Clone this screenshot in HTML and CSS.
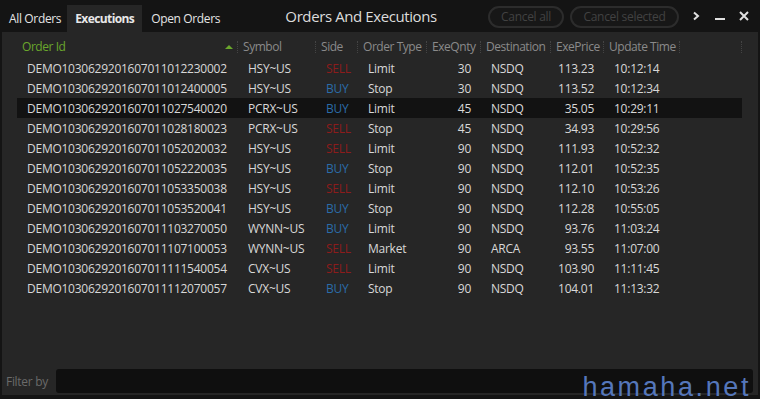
FILE: index.html
```html
<!DOCTYPE html>
<html lang="en">
<head>
    <meta charset="UTF-8">
    <meta name="viewport" content="width=device-width, initial-scale=1.0">
    <title>Orders And Executions</title>
    <link rel="stylesheet" href="styles.css">
</head>
<body>
    <div class="window">
        <div class="titlebar">
            <div class="tabs">
                <div class="tab">All Orders</div>
                <div class="tab active">Executions</div>
                <div class="tab">Open Orders</div>
            </div>
            <div class="title">Orders And Executions</div>
            <div class="actions">
                <button class="pill pill-all">Cancel all</button>
                <button class="pill pill-selected">Cancel selected</button>
            </div>
            <div class="win-icons">
                <span class="win-icon">
                    <svg width="8" height="10" viewBox="0 0 8 10"><path d="M2 1.5 L6 5 L2 8.5" fill="none" stroke="#e0e0e0" stroke-width="2"/></svg>
                </span>
                <span class="win-icon">
                    <svg width="10" height="10" viewBox="0 0 10 10"><rect x="0" y="7" width="10" height="2" fill="#e0e0e0"/></svg>
                </span>
                <span class="win-icon">
                    <svg width="10" height="10" viewBox="0 0 10 10"><path d="M1 1 L9 9 M9 1 L1 9" stroke="#e0e0e0" stroke-width="2"/></svg>
                </span>
            </div>
        </div>

        <div class="panel">
            <div class="grid">
                <div class="head">
                    <div class="hcell sorted">Order Id<span class="sort-arrow"></span></div>
                    <div class="hcell">Symbol</div>
                    <div class="hcell">Side</div>
                    <div class="hcell">Order Type</div>
                    <div class="hcell">ExeQnty</div>
                    <div class="hcell">Destination</div>
                    <div class="hcell">ExePrice</div>
                    <div class="hcell">Update Time</div>
                    <div class="hcell"></div>
                </div>
                <div id="rows"></div>
            </div>
            <div class="filter">
                <label class="filter-label">Filter by</label>
                <input class="filter-input" type="text">
            </div>
        </div>
        <div class="watermark">hamaha.net</div>
    </div>

    <script>
        const executions = [
            ["DEMO1030629201607011012230002", "HSY~US", "SELL", "Limit", 30, "NSDQ", "113.23", "10:12:14"],
            ["DEMO1030629201607011012400005", "HSY~US", "BUY", "Stop", 30, "NSDQ", "113.52", "10:12:34"],
            ["DEMO1030629201607011027540020", "PCRX~US", "BUY", "Limit", 45, "NSDQ", "35.05", "10:29:11"],
            ["DEMO1030629201607011028180023", "PCRX~US", "SELL", "Stop", 45, "NSDQ", "34.93", "10:29:56"],
            ["DEMO1030629201607011052020032", "HSY~US", "SELL", "Limit", 90, "NSDQ", "111.93", "10:52:32"],
            ["DEMO1030629201607011052220035", "HSY~US", "BUY", "Stop", 90, "NSDQ", "112.01", "10:52:35"],
            ["DEMO1030629201607011053350038", "HSY~US", "SELL", "Limit", 90, "NSDQ", "112.10", "10:53:26"],
            ["DEMO1030629201607011053520041", "HSY~US", "BUY", "Stop", 90, "NSDQ", "112.28", "10:55:05"],
            ["DEMO1030629201607011103270050", "WYNN~US", "BUY", "Limit", 90, "NSDQ", "93.76", "11:03:24"],
            ["DEMO1030629201607011107100053", "WYNN~US", "SELL", "Market", 90, "ARCA", "93.55", "11:07:00"],
            ["DEMO1030629201607011111540054", "CVX~US", "SELL", "Limit", 90, "NSDQ", "103.90", "11:11:45"],
            ["DEMO1030629201607011112070057", "CVX~US", "BUY", "Stop", 90, "NSDQ", "104.01", "11:13:32"]
        ];

        const rows = document.getElementById('rows');
        executions.forEach((e, i) => {
            const row = document.createElement('div');
            row.className = 'row' + (i === 2 ? ' selected' : '');
            row.innerHTML = `
                <div class="cell">${e[0]}</div>
                <div class="cell">${e[1]}</div>
                <div class="cell ${e[2] === 'BUY' ? 'buy' : 'sell'}">${e[2]}</div>
                <div class="cell">${e[3]}</div>
                <div class="cell num">${e[4]}</div>
                <div class="cell">${e[5]}</div>
                <div class="cell num">${e[6]}</div>
                <div class="cell">${e[7]}</div>
                <div class="cell"></div>
            `;
            rows.appendChild(row);
        });
    </script>
</body>
</html>
```

FILE: styles.css
```css
* {
    box-sizing: border-box;
}
body {
    margin: 0;
    background: #141414;
    font-family: "Open Sans", "Noto Sans", sans-serif;
    font-size: 12px;
    color: #d6d6d6;
}
.window {
    position: relative;
    width: 760px;
    height: 399px;
    background: #141414;
    display: flex;
    flex-direction: column;
    overflow: hidden;
}

/* title bar */
.titlebar {
    height: 32px;
    display: flex;
    align-items: flex-end;
}
.tabs {
    display: flex;
    align-items: flex-end;
    height: 32px;
}
.tab {
    height: 27px;
    line-height: 27px;
    padding: 0 6px 0 9px;
    color: #e4e4e4;
    letter-spacing: -0.35px;
}
.tab.active {
    background: #262626;
    font-weight: bold;
    color: #e8e8e8;
    padding: 0 8px 0 8px;
    margin: 0 3px 0 0;
    letter-spacing: -0.6px;
}
.tab:last-child {
    padding-left: 6px;
}
.title {
    flex: 1;
    align-self: center;
    text-align: center;
    font-size: 15px;
    color: #dcdcdc;
    letter-spacing: -0.4px;
    padding-left: 8px;
}
.actions {
    display: flex;
    gap: 6px;
    align-self: center;
    margin-top: 1px;
}
.pill {
    height: 22px;
    padding: 0;
    border: 2px solid #2c2c2c;
    border-radius: 11px;
    background: #171717;
    color: #424242;
    font-family: inherit;
    font-size: 12px;
    letter-spacing: -0.3px;
    white-space: nowrap;
}
.pill-all {
    width: 76px;
}
.pill-selected {
    width: 109px;
}
.win-icons {
    display: flex;
    align-self: center;
    gap: 14px;
    padding: 0 11px 0 12px;
}
.win-icon {
    display: flex;
    align-items: center;
    justify-content: center;
    width: 10px;
    height: 12px;
}

/* panel */
.panel {
    flex: 1;
    margin: 0 2px 4px;
    background: #262626;
    display: flex;
    flex-direction: column;
}
.grid {
    flex: 1;
    padding: 5px 0 0 15px;
}
.head, .row {
    display: grid;
    grid-template-columns: 221px 78px 42px 69px 54px 70px 53px 76px 62px;
    height: 20px;
    align-items: center;
    width: 725px;
}
.head {
    margin-bottom: 1px;
}
.hcell {
    position: relative;
    padding-left: 5px;
    color: #8a8a8a;
    letter-spacing: -0.45px;
    height: 20px;
    line-height: 20px;
    white-space: nowrap;
}
.hcell::after {
    content: "";
    position: absolute;
    right: 0;
    top: 4px;
    height: 12px;
    border-right: 1px dotted #444;
}
.hcell.sorted {
    color: #6aa62c;
}
.sort-arrow {
    position: absolute;
    right: 5px;
    top: 8px;
    width: 0;
    height: 0;
    border-left: 4px solid transparent;
    border-right: 4px solid transparent;
    border-bottom: 4px solid #6aa62c;
}
.row {
    color: #d8d8d8;
}
.row.selected {
    background: #121212;
}
.cell {
    padding-left: 10px;
    white-space: nowrap;
    letter-spacing: -0.25px;
}
.cell.num {
    text-align: right;
    padding: 0 10px 0 0;
}
.cell.sell {
    color: #8c1c1c;
}
.cell.buy {
    color: #2b6ca8;
}

/* filter */
.filter {
    height: 26px;
    display: flex;
    align-items: flex-start;
    padding-right: 5px;
}
.filter-label {
    width: 54px;
    padding: 4px 0 0 4px;
    color: #6a6a6a;
    letter-spacing: -0.3px;
}
.filter-input {
    flex: 1;
    height: 24px;
    border: none;
    border-radius: 3px;
    background: #0f0f0f;
    outline: none;
}
.watermark {
    position: absolute;
    right: 9px;
    bottom: -3px;
    font-family: "Liberation Sans", Arial, sans-serif;
    font-size: 27px;
    line-height: 30px;
    color: #5577bb;
    letter-spacing: 2.6px;
}
```
